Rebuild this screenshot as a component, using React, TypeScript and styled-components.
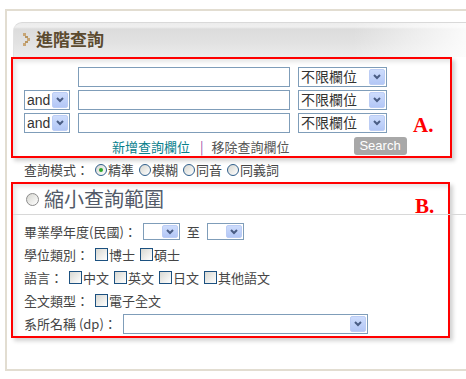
import styled, { createGlobalStyle } from 'styled-components';

const GlobalStyle = createGlobalStyle`
  body {
    margin: 0;
    background: #fff;
    overflow: hidden;
    font-family: "Liberation Sans", "Noto Sans CJK TC", sans-serif;
    font-size: 13px;
    color: #454545;
  }
`

const Chevron = () => (
  <svg width="8" height="6" viewBox="0 0 8 6">
    <path d="M1 1 L4 4 L7 1" fill="none" stroke="#4a5d85" strokeWidth="2" />
  </svg>
)

const TitleMark = () => (
  <svg width="8" height="13" viewBox="0 0 8 13">
    <rect x="0" y="0" width="3" height="3" fill="#c8a676" />
    <rect x="2" y="3" width="3" height="2" fill="#b89560" />
    <rect x="4" y="5" width="3" height="3" fill="#c8a676" />
    <rect x="2" y="8" width="3" height="2" fill="#b89560" />
    <rect x="0" y="10" width="3" height="3" fill="#c8a676" />
  </svg>
)

type SelectProps = { width: number; height?: number; label?: string }

const Select = ({ width, height = 20, label }: SelectProps) => (
  <SelectBox $w={width} $h={height}>
    <SelectText>{label}</SelectText>
    <ArrowButton>
      <Chevron />
    </ArrowButton>
  </SelectBox>
)

const Radio = ({ checked = false, big = false }: { checked?: boolean; big?: boolean }) => (
  <RadioCircle $big={big}>{checked && <RadioDot />}</RadioCircle>
)

const CheckItem = ({ label }: { label: string }) => (
  <Option>
    <CheckBox />
    {label}
  </Option>
)

const App = () => {
  return (
    <>
      <GlobalStyle />
      <Frame>
        <Header>
          <TitleMark />
          <Title>進階查詢</Title>
        </Header>

        <BoxA>
          <FieldGrid>
            <span />
            <TextInput />
            <Select width={89} label="不限欄位" />
            <Select width={46} label="and" />
            <TextInput />
            <Select width={89} label="不限欄位" />
            <Select width={46} label="and" />
            <TextInput />
            <Select width={89} label="不限欄位" />
          </FieldGrid>
          <ActionRow>
            <AddLink>新增查詢欄位</AddLink>
            <Divider>|</Divider>
            <RemoveLink>移除查詢欄位</RemoveLink>
            <SearchButton>Search</SearchButton>
          </ActionRow>
          <Mark $left={400} $top={56}>A.</Mark>
        </BoxA>

        <ModeRow>
          <Label>查詢模式：</Label>
          <Options>
            <Option><Radio checked />精準</Option>
            <Option><Radio />模糊</Option>
            <Option><Radio />同音</Option>
            <Option><Radio />同義詞</Option>
          </Options>
        </ModeRow>

        <BoxB>
          <ScopeTitle>
            <Radio big />
            <ScopeText>縮小查詢範圍</ScopeText>
          </ScopeTitle>
          <Rule />
          <Row>
            <Label>畢業學年度(民國)：</Label>
            <Select width={37} height={17} />
            <To>至</To>
            <Select width={37} height={17} />
          </Row>
          <Row>
            <Label>學位類別：</Label>
            <Options>
              <CheckItem label="博士" />
              <CheckItem label="碩士" />
            </Options>
          </Row>
          <Row>
            <Label>語言：</Label>
            <Options>
              <CheckItem label="中文" />
              <CheckItem label="英文" />
              <CheckItem label="日文" />
              <CheckItem label="其他語文" />
            </Options>
          </Row>
          <Row>
            <Label>全文類型：</Label>
            <Options>
              <CheckItem label="電子全文" />
            </Options>
          </Row>
          <Row>
            <Label>系所名稱 (dp)：</Label>
            <Select width={245} />
          </Row>
          <Mark $left={402} $top={12}>B.</Mark>
        </BoxB>
      </Frame>
    </>
  )
}

const Frame = styled.div`
  box-sizing: border-box;
  margin: 9px 0 0 5px;
  width: 480px;
  height: 362px;
  border: 2px solid #e2ddd1;
  border-right: none;
  padding: 11px 0 0 4px;
`

const Header = styled.div`
  display: flex;
  align-items: center;
  gap: 5px;
  box-sizing: border-box;
  margin-left: 2px;
  height: 35px;
  padding: 0 0 2px 9px;
  border-radius: 9px 0 0 0;
  border-top: 1px solid #d9d9d9;
  border-left: 1px solid #e2e2e2;
  background:
    linear-gradient(to right, rgba(255, 255, 255, 0) 72%, #fff 100%),
    linear-gradient(#ececec 0, #efefef 4px, #dcdcdc 6px, #e2e2e2 60%, #ececec 100%);
`

const Title = styled.h1`
  margin: 0;
  font-family: "Noto Sans CJK TC", sans-serif;
  font-size: 17px;
  line-height: 20px;
  font-weight: bold;
  color: #5b4a2f;
`

const RedBox = styled.div`
  position: relative;
  box-sizing: border-box;
  border: 2px solid #ff0000;
  background: #fff;
  box-shadow: inset 3px 3px 4px rgba(0, 0, 0, 0.1), 3px 3px 4px rgba(0, 0, 0, 0.18);
`

const BoxA = styled(RedBox)`
  width: 441px;
  height: 101px;
  padding: 8px 0 0 11px;
`

const BoxB = styled(RedBox)`
  width: 439px;
  height: 156px;
  padding: 0 0 0 11px;
`

const FieldGrid = styled.div`
  display: grid;
  grid-template-columns: 46px 212px 89px;
  grid-auto-rows: 20px;
  column-gap: 8px;
  row-gap: 3px;
`

const TextInput = styled.div`
  box-sizing: border-box;
  height: 20px;
  border: 1px solid #7f9db9;
  background: #fff;
`

const SelectBox = styled.div<{ $w: number; $h: number }>`
  box-sizing: border-box;
  display: flex;
  align-items: center;
  justify-content: space-between;
  width: ${p => p.$w}px;
  height: ${p => p.$h}px;
  padding: 1px 1px 1px 2px;
  border: 1px solid #7f9db9;
  background: #fff;
`

const SelectText = styled.span`
  font-family: "Liberation Sans", "Noto Sans CJK TC", sans-serif;
  font-size: 14px;
  line-height: 16px;
  color: #333;
`

const ArrowButton = styled.span`
  box-sizing: border-box;
  display: flex;
  align-items: center;
  justify-content: center;
  width: 16px;
  height: 100%;
  border: 1px solid #bccdf5;
  border-radius: 2px;
  background: linear-gradient(#cddcfc, #b3c7f6);
`

const ActionRow = styled.div`
  display: flex;
  align-items: center;
  height: 18px;
  margin-top: 4px;
  padding-left: 88px;
  font-family: "Noto Sans CJK TC", sans-serif;
  font-size: 13px;
`

const AddLink = styled.span`
  color: #08808c;
`

const Divider = styled.span`
  margin: 0 8px 0 10px;
  color: #a050a8;
`

const RemoveLink = styled.span`
  color: #555;
`

const SearchButton = styled.button`
  width: 53px;
  height: 18px;
  margin-left: 64px;
  padding: 0;
  border: none;
  border-radius: 3px;
  background: #a8a8a8;
  color: #fff;
  font-family: "Liberation Sans", sans-serif;
  font-size: 13px;
  line-height: 18px;
`

const Mark = styled.span<{ $left: number; $top: number }>`
  position: absolute;
  left: ${p => p.$left}px;
  top: ${p => p.$top}px;
  font-family: "Liberation Serif", serif;
  font-weight: bold;
  font-size: 21px;
  line-height: 21px;
  color: #ff0000;
`

const ModeRow = styled.div`
  display: flex;
  align-items: center;
  height: 24px;
  padding-left: 13px;
`

const Label = styled.span`
  font-family: "Noto Sans CJK TC", sans-serif;
  font-size: 13px;
  line-height: 16px;
  color: #454545;
  margin-right: 6px;
`

const Options = styled.div`
  display: flex;
  align-items: center;
  gap: 5px;
`

const Option = styled.label`
  display: flex;
  align-items: center;
  font-family: "Noto Sans CJK TC", sans-serif;
  font-size: 13px;
  line-height: 16px;
  color: #454545;
`

const RadioCircle = styled.span<{ $big: boolean }>`
  box-sizing: border-box;
  display: flex;
  align-items: center;
  justify-content: center;
  width: ${p => (p.$big ? 13 : 12)}px;
  height: ${p => (p.$big ? 13 : 12)}px;
  margin-right: 1px;
  border-radius: 50%;
  border: 1px solid ${p => (p.$big ? '#8c8c8c' : '#2f5f8c')};
  background: linear-gradient(135deg, #d6d6d0, #fff);
`

const RadioDot = styled.span`
  width: 4px;
  height: 4px;
  border-radius: 50%;
  background: #2aa52a;
`

const CheckBox = styled.span`
  box-sizing: border-box;
  width: 13px;
  height: 13px;
  margin-right: 1px;
  border: 1px solid #1c5180;
  background: linear-gradient(135deg, #d8d8d2, #fff);
`

const ScopeTitle = styled.div`
  display: flex;
  align-items: center;
  gap: 4px;
  height: 30px;
  padding-left: 2px;
`

const ScopeText = styled.span`
  font-family: "Noto Sans CJK TC", sans-serif;
  font-size: 20px;
  line-height: 24px;
  color: #525a68;
`

const Rule = styled.div`
  height: 1px;
  margin: 0 -30px 5px -11px;
  background: #d8d8d8;
`

const Row = styled.div`
  display: flex;
  align-items: center;
  height: 23px;
`

const To = styled.span`
  margin: 0 7px;
  font-family: "Noto Sans CJK TC", sans-serif;
  color: #454545;
`

export default App
